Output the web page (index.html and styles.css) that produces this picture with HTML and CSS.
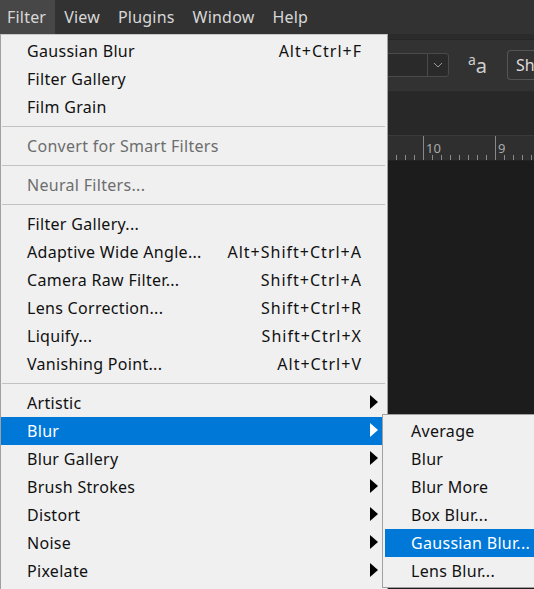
FILE: index.html
```html
<!DOCTYPE html>
<html lang="en">
<head>
<meta charset="utf-8">
<title>Filter menu</title>
<link rel="stylesheet" href="styles.css">
</head>
<body>
<div class="app">
  <header class="menubar">
    <span class="mb-item active">Filter</span>
    <span class="mb-item">View</span>
    <span class="mb-item">Plugins</span>
    <span class="mb-item">Window</span>
    <span class="mb-item">Help</span>
  </header>
  <div class="strip"></div>
  <div class="optionsbar">
    <div class="dropdown">
      <span class="dd-field"></span>
      <span class="dd-btn"><svg width="10" height="6" viewBox="0 0 10 6"><path d="M1 1 L5 5 L9 1" fill="none" stroke="#9a9a9a" stroke-width="1"/></svg></span>
    </div>
    <span class="aa"><span class="aa-small">a</span><span class="aa-big">a</span></span>
    <span class="sharp">Sh</span>
  </div>
  <div class="tabbar"></div>
  <div class="ruler">
    <span class="r-seg">11</span>
    <span class="r-seg">10</span>
    <span class="r-seg">9</span>
  </div>
  <div class="canvas"></div>

  <nav class="menu main-menu">
    <div class="mi"><span class="lbl">Gaussian Blur</span><span class="sc">Alt+Ctrl+F</span></div>
    <div class="mi"><span class="lbl">Filter Gallery</span></div>
    <div class="mi"><span class="lbl">Film Grain</span></div>
    <div class="sep"></div>
    <div class="mi disabled"><span class="lbl">Convert for Smart Filters</span></div>
    <div class="sep"></div>
    <div class="mi disabled"><span class="lbl">Neural Filters...</span></div>
    <div class="sep"></div>
    <div class="mi"><span class="lbl">Filter Gallery...</span></div>
    <div class="mi"><span class="lbl">Adaptive Wide Angle...</span><span class="sc">Alt+Shift+Ctrl+A</span></div>
    <div class="mi"><span class="lbl">Camera Raw Filter...</span><span class="sc">Shift+Ctrl+A</span></div>
    <div class="mi"><span class="lbl">Lens Correction...</span><span class="sc">Shift+Ctrl+R</span></div>
    <div class="mi"><span class="lbl">Liquify...</span><span class="sc">Shift+Ctrl+X</span></div>
    <div class="mi"><span class="lbl">Vanishing Point...</span><span class="sc">Alt+Ctrl+V</span></div>
    <div class="sep"></div>
    <div class="mi"><span class="lbl">Artistic</span><span class="arr"></span></div>
    <div class="mi hl"><span class="lbl">Blur</span><span class="arr"></span></div>
    <div class="mi"><span class="lbl">Blur Gallery</span><span class="arr"></span></div>
    <div class="mi"><span class="lbl">Brush Strokes</span><span class="arr"></span></div>
    <div class="mi"><span class="lbl">Distort</span><span class="arr"></span></div>
    <div class="mi"><span class="lbl">Noise</span><span class="arr"></span></div>
    <div class="mi"><span class="lbl">Pixelate</span><span class="arr"></span></div>
  </nav>

  <nav class="menu sub-menu">
    <div class="mi"><span class="lbl">Average</span></div>
    <div class="mi"><span class="lbl">Blur</span></div>
    <div class="mi"><span class="lbl">Blur More</span></div>
    <div class="mi"><span class="lbl">Box Blur...</span></div>
    <div class="mi hl"><span class="lbl">Gaussian Blur...</span></div>
    <div class="mi"><span class="lbl">Lens Blur...</span></div>
  </nav>
</div>
</body>
</html>
```
FILE: styles.css
```css
html, body {
  margin: 0;
  padding: 0;
  width: 534px;
  height: 589px;
  overflow: hidden;
  background: #1c1c1c;
}
.app {
  position: relative;
  width: 534px;
  height: 589px;
  overflow: hidden;
  font-family: "Noto Sans", "Open Sans", sans-serif;
  font-size: 16px;
  display: flex;
  flex-direction: column;
}
.menubar {
  height: 34px;
  flex: 0 0 34px;
  background: #323232;
  display: flex;
  align-items: stretch;
}
.mb-item {
  display: flex;
  align-items: center;
  padding: 0 9px 1px 9px;
  color: #d8d8d8;
  font-size: 16px;
  letter-spacing: 0.2px;
  line-height: 1;
}
.mb-item.active {
  background: #474747;
  padding-left: 7px;
}
.strip {
  flex: 0 0 5px;
  background: #2b2b2b;
  border-bottom: 1px solid #262626;
}
.optionsbar {
  flex: 0 0 51px;
  background: #323232;
  border-bottom: 1px solid #2a2a2a;
  display: flex;
  align-items: center;
  padding-left: 300px;
}
.dropdown {
  flex: none;
  display: flex;
  height: 22px;
  border: 1px solid #4a4a4a;
  border-radius: 3px;
  background: #2a2a2a;
  margin-top: -2px;
}
.dd-field {
  width: 126px;
  border-right: 1px solid #4a4a4a;
}
.dd-btn {
  width: 20px;
  display: flex;
  align-items: center;
  justify-content: center;
}
.aa {
  flex: none;
  margin-left: 19px;
  color: #cfcfcf;
  display: flex;
  align-items: flex-start;
  width: 39px;
}
.aa-small {
  font-size: 14px;
  line-height: 1;
  margin-top: -3px;
}
.aa-big {
  font-size: 20px;
  line-height: 1;
}
.sharp {
  flex: none;
  height: 28px;
  padding: 0 12px 0 8px;
  border: 1px solid #555;
  border-right: none;
  border-radius: 4px 0 0 4px;
  color: #dcdcdc;
  display: flex;
  align-items: center;
  font-size: 16px;
  margin-top: -1px;
}
.tabbar {
  flex: 0 0 43px;
  background: #282828;
  border-bottom: 1px solid #3a3a3a;
}
.ruler {
  flex: 0 0 24px;
  background: #2f2f2f;
  display: flex;
  padding-left: 351px;
  color: #aaaaaa;
  font-size: 13px;
  border-bottom: 1px solid #222;
}
.r-seg {
  flex: 0 0 72px;
  box-sizing: border-box;
  border-left: 1px solid #888;
  padding: 6px 0 0 2px;
  line-height: 1;
  background-image: repeating-linear-gradient(to right, transparent 0, transparent 8px, #8a8a8a 8px, #8a8a8a 9px);
  background-size: 100% 5px;
  background-position: 0 100%;
  background-repeat: no-repeat;
}
.canvas {
  flex: 1;
  background: #1c1c1c;
}

/* menus */
.menu {
  position: absolute;
  background: #f0f0f0;
  border: 1px solid #a0a0a0;
  box-sizing: border-box;
  color: #111;
}
.main-menu {
  left: 0;
  top: 34px;
  width: 388px;
  padding: 2px 2px 4px 0;
  border-top-color: #c8c8c8;
}
.sub-menu {
  left: 382px;
  top: 414px;
  width: 200px;
  padding: 2px;
}
.mi {
  height: 28px;
  display: grid;
  grid-template-columns: 1fr auto 17px;
  align-items: center;
  padding: 0 7px 0 26px;
  white-space: nowrap;
  line-height: 1;
  letter-spacing: 0.3px;
}
.mi .lbl { padding-bottom: 1px; }
.mi .sc { padding-bottom: 1px; letter-spacing: 1px; margin-right: -1px; }
.mi.disabled { color: #6d6d6d; }
.mi.hl {
  background: #0078d7;
  color: #fff;
}
.arr {
  grid-column: 3;
  justify-self: end;
  width: 0;
  height: 0;
  border-top: 7px solid transparent;
  border-bottom: 7px solid transparent;
  border-left: 8px solid #000;
  margin-top: -3px;
}
.mi.hl .arr { border-left-color: #fff; }
.sep {
  height: 11px;
  display: flex;
  align-items: center;
}
.sep::before {
  content: "";
  flex: 1;
  height: 1px;
  background: #c2c2c2;
  margin-left: 1px;
}
```
